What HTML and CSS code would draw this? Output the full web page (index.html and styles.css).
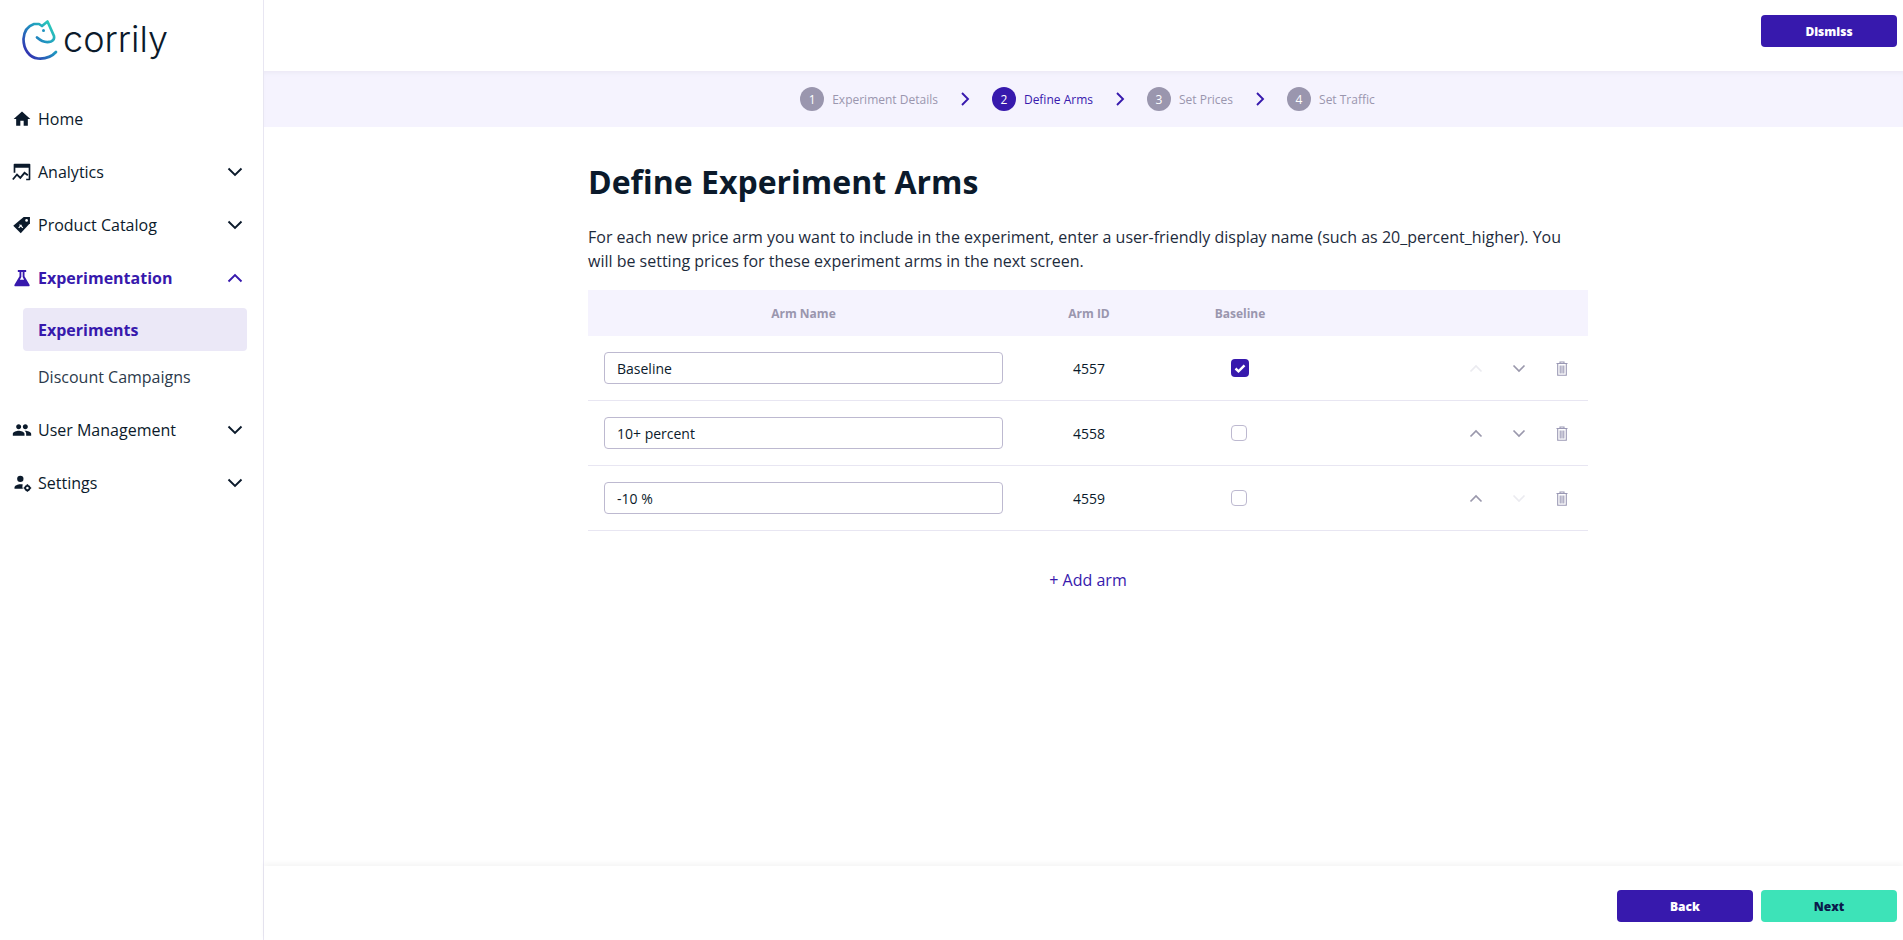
FILE: index.html
```html
<!DOCTYPE html>
<html lang="en">
<head>
<meta charset="utf-8">
<title>Define Experiment Arms</title>
<link rel="stylesheet" href="styles.css">
</head>
<body>
<div class="app">
  <aside class="sidebar">
    <div class="logo">
      <svg class="logo-mark" viewBox="0 0 42 44" width="42" height="44">
        <defs>
          <linearGradient id="lg" x1="0" y1="1" x2="1" y2="0">
            <stop offset="0" stop-color="#3719ad"/>
            <stop offset="0.55" stop-color="#1f93c0"/>
            <stop offset="1" stop-color="#2fdcb8"/>
          </linearGradient>
        </defs>
        <path d="M36 34C31 39.500 25 41 18 40.500C9 39.500 3.500 31 3.500 21C4 13 8 8 14 6L19 6L22 8L27.500 3.500L30 9L34 18C34.500 20.500 33.500 22.500 31 23.500C26 25 21 23 17 19.500" fill="none" stroke="url(#lg)" stroke-width="2.700" stroke-linejoin="round" stroke-linecap="round"/>
        <circle cx="23.500" cy="12.500" r="1.500" fill="#1f93c0"/>
      </svg>
      <span class="logo-text">corrily</span>
    </div>
    <nav class="nav">
      <a class="nav-row">
        <svg class="nav-icon" viewBox="0 0 24 24"><path d="M10 20v-6h4v6h5v-8h3L12 3 2 12h3v8z"/></svg>
        <span class="nav-label">Home</span>
      </a>
      <a class="nav-row">
        <svg class="nav-icon" viewBox="0 0 24 24"><path d="M3 2h18a1 1 0 0 1 1 1v18a1 1 0 0 1-1 1h-4v-2h3V7H4v6H2V3a1 1 0 0 1 1-1z"/><path d="M1 21l5-6 4 4 5-6 4 3" fill="none" stroke="currentColor" stroke-width="2.200"/></svg>
        <span class="nav-label">Analytics</span>
        <svg class="chev" viewBox="0 0 16 10"><path d="M1.500 1.500L8 8l6.500-6.500"/></svg>
      </a>
      <a class="nav-row">
        <svg class="nav-icon" viewBox="0 0 24 24"><path d="M14 2.500h7.500V10L10.500 22 1.500 13z"/><circle cx="17.500" cy="6.500" r="1.600" fill="#fff"/><path d="M8 15.500l3.500-3.500M9 11.500l4 4" stroke="#fff" stroke-width="1.400" fill="none"/></svg>
        <span class="nav-label">Product Catalog</span>
        <svg class="chev" viewBox="0 0 16 10"><path d="M1.500 1.500L8 8l6.500-6.500"/></svg>
      </a>
      <a class="nav-row nav-row-active">
        <svg class="nav-icon" viewBox="0 0 24 24"><path d="M7 2.500h10v2.200h-2V10l6 10c.6 1.200-.2 2-1.300 2H4.300C3.200 22 2.400 21.200 3 20l6-10V4.700H7z"/><path d="M11.200 4.700v6L9.500 14h5l-1.700-3.300v-6z" fill="#fff"/></svg>
        <span class="nav-label">Experimentation</span>
        <svg class="chev" viewBox="0 0 16 10"><path d="M1.500 8.500L8 2l6.500 6.500"/></svg>
      </a>
      <a class="sub-item sub-item-active">Experiments</a>
      <a class="sub-item sub-item-plain">Discount Campaigns</a>
      <a class="nav-row">
        <svg class="nav-icon" viewBox="0 0 24 24"><path d="M16 11c1.700 0 3-1.300 3-3s-1.300-3-3-3-3 1.300-3 3 1.300 3 3 3zm-8 0c1.700 0 3-1.300 3-3S9.700 5 8 5 5 6.300 5 8s1.300 3 3 3zm0 2c-2.300 0-7 1.200-7 3.500V19h14v-2.500C15 14.200 10.300 13 8 13zm8 0h-1c1.200.8 2 2 2 3.500V19h6v-2.500c0-2.300-4.700-3.500-7-3.500z"/></svg>
        <span class="nav-label">User Management</span>
        <svg class="chev" viewBox="0 0 16 10"><path d="M1.500 1.500L8 8l6.500-6.500"/></svg>
      </a>
      <a class="nav-row">
        <svg class="nav-icon" viewBox="0 0 24 24"><circle cx="10" cy="7" r="3.800"/><path d="M3 19v-1.500C3 15 7 13.500 10 13.500c1 0 2 .1 3 .4-.7 1.600-.7 3.500.1 5.100z"/><circle cx="18.500" cy="18" r="2.600" fill="none" stroke="currentColor" stroke-width="2.200"/><path d="M18.500 13.500v2M18.500 20.500v2M14 18h2M21 18h2" stroke="currentColor" stroke-width="1.800"/></svg>
        <span class="nav-label">Settings</span>
        <svg class="chev" viewBox="0 0 16 10"><path d="M1.500 1.500L8 8l6.500-6.500"/></svg>
      </a>
    </nav>
  </aside>

  <main class="main">
    <header class="topbar">
      <button class="btn btn-primary">Dismiss</button>
    </header>

    <div class="stepper">
      <div class="step"><span class="step-num">1</span><span class="step-text">Experiment Details</span></div>
      <svg class="step-chev" viewBox="0 0 10 16"><path d="M2 2l6 6-6 6"/></svg>
      <div class="step step-current"><span class="step-num">2</span><span class="step-text">Define Arms</span></div>
      <svg class="step-chev" viewBox="0 0 10 16"><path d="M2 2l6 6-6 6"/></svg>
      <div class="step"><span class="step-num">3</span><span class="step-text">Set Prices</span></div>
      <svg class="step-chev" viewBox="0 0 10 16"><path d="M2 2l6 6-6 6"/></svg>
      <div class="step"><span class="step-num">4</span><span class="step-text">Set Traffic</span></div>
    </div>

    <section class="content">
      <div class="column">
        <h1 class="title">Define Experiment Arms</h1>
        <p class="intro">For each new price arm you want to include in the experiment, enter a user-friendly display name (such as 20_percent_higher). You will be setting prices for these experiment arms in the next screen.</p>

        <div class="table">
          <div class="grid thead">
            <div class="th">Arm Name</div>
            <div class="th">Arm ID</div>
            <div class="th">Baseline</div>
            <div></div>
          </div>

          <div class="grid row">
            <div class="cell-name"><input class="name-input" type="text" value="Baseline"></div>
            <div class="cell">4557</div>
            <div class="cell"><span class="check check-on"><svg viewBox="0 0 18 18"><path d="M4.500 9.500l3 2.800 6-6"/></svg></span></div>
            <div class="actions">
              <svg class="arrow arrow-off" viewBox="0 0 14 9"><path d="M1.500 7.500L7 2l5.500 5.500"/></svg>
              <svg class="arrow" viewBox="0 0 14 9"><path d="M1.500 1.500L7 7l5.500-5.500"/></svg>
              <svg class="trash" viewBox="0 0 12 15"><path d="M.5 2.500h11M4 2.500V1h4v1.500M1.700 2.500v11.800h8.600V2.500M4.200 4.500v8M6 4.500v8M7.800 4.500v8"/></svg>
            </div>
          </div>

          <div class="grid row">
            <div class="cell-name"><input class="name-input" type="text" value="10+ percent"></div>
            <div class="cell">4558</div>
            <div class="cell"><span class="check"></span></div>
            <div class="actions">
              <svg class="arrow" viewBox="0 0 14 9"><path d="M1.500 7.500L7 2l5.500 5.500"/></svg>
              <svg class="arrow" viewBox="0 0 14 9"><path d="M1.500 1.500L7 7l5.500-5.500"/></svg>
              <svg class="trash" viewBox="0 0 12 15"><path d="M.5 2.500h11M4 2.500V1h4v1.500M1.700 2.500v11.800h8.600V2.500M4.200 4.500v8M6 4.500v8M7.800 4.500v8"/></svg>
            </div>
          </div>

          <div class="grid row">
            <div class="cell-name"><input class="name-input" type="text" value="-10 %"></div>
            <div class="cell">4559</div>
            <div class="cell"><span class="check"></span></div>
            <div class="actions">
              <svg class="arrow" viewBox="0 0 14 9"><path d="M1.500 7.500L7 2l5.500 5.500"/></svg>
              <svg class="arrow arrow-off" viewBox="0 0 14 9"><path d="M1.500 1.500L7 7l5.500-5.500"/></svg>
              <svg class="trash" viewBox="0 0 12 15"><path d="M.5 2.500h11M4 2.500V1h4v1.500M1.700 2.500v11.800h8.600V2.500M4.200 4.500v8M6 4.500v8M7.800 4.500v8"/></svg>
            </div>
          </div>
        </div>

        <div class="add-arm">+ Add arm</div>
      </div>
    </section>

    <footer class="footer">
      <button class="btn btn-primary">Back</button>
      <button class="btn btn-accent">Next</button>
    </footer>
  </main>
</div>
</body>
</html>
```
FILE: styles.css
```css
* { box-sizing: border-box; }
html, body { margin: 0; height: 100%; overflow: hidden; }
body { font-family: "Open Sans", sans-serif; color: #0b1a2b; background: #fff; }
.app { display: flex; height: 940px; }

.sidebar { width: 264px; flex: none; border-right: 1px solid #e8e6f2; }
.logo { height: 92px; padding: 18px 0 0 20px; display: flex; align-items: flex-start; gap: 1px; }
.logo-text { font-family: "Inter", sans-serif; font-size: 36px; font-weight: 300; line-height: 42px; color: #0b1a2b; }
.nav { display: flex; flex-direction: column; }
.nav-row { height: 53px; display: flex; align-items: center; padding: 0 20px 0 12px; font-size: 16px; color: #0b1a2b; }
.nav-icon { width: 20px; height: 20px; fill: currentColor; flex: none; margin-right: 6px; }
.nav-label { flex: 1; }
.chev { width: 16px; height: 10px; fill: none; stroke: currentColor; stroke-width: 1.900; flex: none; }
.nav-row-active { color: #3719ad; font-weight: 700; }
.sub-item { display: flex; align-items: center; margin: 0 16px 0 23px; padding-left: 15px; font-size: 16px; border-radius: 4px; }
.sub-item-active { height: 43px; margin-top: 4px; background: #ebe8f7; color: #3719ad; font-weight: 700; }
.sub-item-plain { height: 52px; color: #2c3a4b; }

.main { flex: 1; min-width: 0; display: flex; flex-direction: column; }
.topbar { height: 71px; flex: none; display: flex; justify-content: flex-end; align-items: flex-start; padding: 15px 6px 0 0; }
.btn { width: 136px; height: 32px; border: 0; border-radius: 4px; font-family: "Open Sans", sans-serif; font-size: 12px; font-weight: 800; }
.btn-primary { background: #3719ad; color: #fff; }
.btn-accent { background: #3de3b8; color: #0b1a4b; }

.stepper { height: 56px; flex: none; background: #f5f3fe; box-shadow: inset 0 4px 4px -2px #ebe9f5; display: flex; align-items: center; justify-content: center; padding-left: 8px; }
.step { display: flex; align-items: center; gap: 8px; font-size: 12px; color: #9a96ae; }
.step-num { width: 24px; height: 24px; border-radius: 50%; background: #9a96ae; color: #fff; display: flex; align-items: center; justify-content: center; }
.step-current { color: #3719ad; }
.step-current .step-num { background: #3719ad; }
.step-chev { width: 10px; height: 16px; margin: 0 22px; fill: none; stroke: #3719ad; stroke-width: 1.900; flex: none; }

.content { flex: 1; min-height: 0; padding-left: 324px; }
.column { width: 1000px; }
.title { margin: 32px 0 0; font-size: 32px; line-height: 46px; font-weight: 700; color: #0b1a2b; }
.intro { margin: 20px 0 0; font-size: 16px; line-height: 24px; color: #1d2b3c; }

.table { margin-top: 17px; }
.grid { display: grid; grid-template-columns: 431px 140px 162px 1fr; align-items: center; }
.thead { height: 46px; background: #f5f3fe; }
.th { font-size: 12px; font-weight: 700; color: #9a96ae; text-align: center; }
.row { height: 65px; border-bottom: 1px solid #e8e6f2; }
.cell { font-size: 14px; text-align: center; display: flex; justify-content: center; color: #0b1a2b; }
.cell-name { padding: 0 16px; }
.name-input { display: block; width: 399px; height: 32px; padding: 0 12px; border: 1px solid #bdb9d0; border-radius: 4px; font: 14px "Open Sans", sans-serif; color: #0b1a2b; background: #fff; outline: 0; }
.check { width: 16px; height: 16px; border: 1px solid #bdb9d0; border-radius: 4px; display: block; margin-right: 2px; }
.check-on { width: 18px; height: 18px; margin-right: 0; background: #3719ad; border: 0; }
.check-on svg { display: block; width: 18px; height: 18px; fill: none; stroke: #fff; stroke-width: 2.400; }
.actions { display: flex; align-items: center; justify-content: flex-end; padding-right: 20px; }
.arrow { width: 14px; height: 9px; fill: none; stroke: #9a98ac; stroke-width: 1.700; margin-right: 29px; flex: none; }
.arrow-off { stroke: #ebebf0; }
.trash { width: 12px; height: 15px; margin-left: 1px; fill: none; stroke: #9a98b4; stroke-width: 1.100; flex: none; }

.add-arm { margin-top: 37px; text-align: center; font-size: 16px; line-height: 24px; color: #3719ad; }

.footer { height: 74px; flex: none; box-shadow: 0 -3px 5px rgba(0, 0, 0, 0.04); display: flex; justify-content: flex-end; align-items: flex-start; gap: 8px; padding: 24px 6px 0 0; }
```
